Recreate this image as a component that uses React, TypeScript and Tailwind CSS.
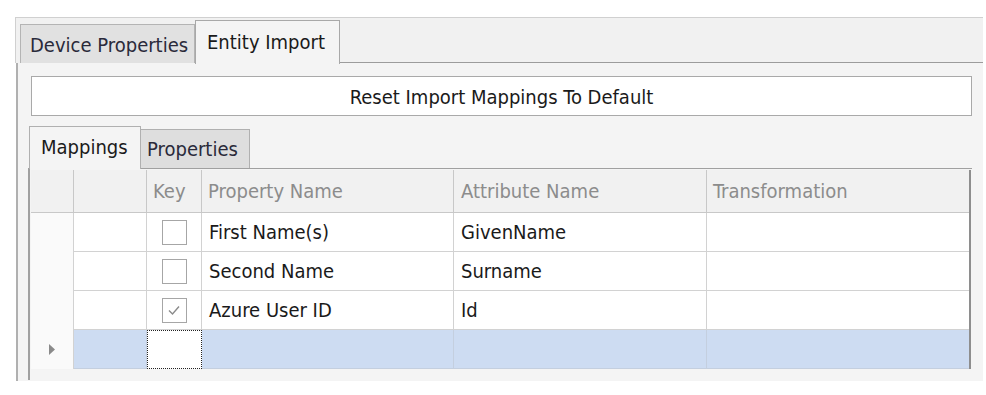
import React from "react";

const rows = [
  { key: false, prop: "First Name(s)", attr: "GivenName" },
  { key: false, prop: "Second Name", attr: "Surname" },
  { key: true, prop: "Azure User ID", attr: "Id" },
];

const cols = "grid-cols-[43px_73px_55px_252px_253px_262px]";

function Check({ on }: { on: boolean }) {
  return (
    <div className="w-[25px] h-[25px] border border-[#a6a6a6] bg-white flex items-center justify-center">
      {on && (
        <svg width="14" height="12" viewBox="0 0 14 12">
          <path d="M2 6.5 L5.5 10 L12 2.5" fill="none" stroke="#8a8a8a" strokeWidth="1.4" />
        </svg>
      )}
    </div>
  );
}

export default function App() {
  return (
    <div
      className="w-[986px] h-[395px] bg-white overflow-hidden pt-[17px] pl-[15px] pr-[3px] text-[20px] leading-none text-[#1a1a1a]"
      style={{ fontFamily: '"DejaVu Sans", Tahoma, sans-serif', fontStretch: "condensed" }}
    >
      {/* outer tab strip */}
      <div className="h-[46px] flex items-end bg-[#f1f1f1] border-t border-l border-[#d0d0d0] pl-[4px]">
        <div className="h-[39px] w-[175px] bg-[#e1e1e1] border border-b-0 border-[#b4b4b4] flex items-center pl-[9px] pt-[2px] text-[#2a2a3a]">
          Device Properties
        </div>
        <div className="h-[44px] w-[145px] -mb-px relative z-10 bg-[#f4f4f4] border border-b-0 border-[#a8a8a8] flex items-center pl-[11px] pb-[1px]">
          Entity Import
        </div>
        <div className="flex-1 h-full border-b border-[#9c9c9c]" />
      </div>

      {/* outer panel */}
      <div className="ml-px h-[318px] bg-[#f4f4f4] border-l-2 border-[#b0b0b0] pt-[13px] pl-[13px] pr-[11px]">
        <div className="h-[40px] bg-white border border-[#a9a9a9] flex items-center justify-center pt-[1px]">
          Reset Import Mappings To Default
        </div>

        {/* inner tabs */}
        <div className="mt-[9px] flex items-end h-[43px] -ml-[2px]">
          <div className="h-[43px] w-[112px] -mb-px relative z-10 bg-[#f4f4f4] border border-b-0 border-[#b0b0b0] flex items-center pl-[11px] pb-[2px]">
            Mappings
          </div>
          <div className="h-[39px] w-[109px] bg-[#dedede] border border-l-0 border-b-0 border-[#b0b0b0] flex items-center pl-[6px] text-[#2a2a3a]">
            Properties
          </div>
        </div>

        {/* tab page */}
        <div className="-ml-[3px] h-[212px] border-l-2 border-t border-[#a0a0a0] pt-[1px] pl-[1px]">
          <div className="w-[940px] border-r-2 border-[#8e8e8e]">
            <div className={`grid ${cols} h-[43px] bg-[#f1f1f1] border-b border-[#c8c8c8] text-[#8c8c8c]`}>
              <div className="border-r border-[#c8c8c8]" />
              <div className="border-r border-[#c8c8c8]" />
              <div className="border-r border-[#c8c8c8] flex items-center pl-[6px]">Key</div>
              <div className="border-r border-[#c8c8c8] flex items-center pl-[6px]">Property Name</div>
              <div className="border-r border-[#c8c8c8] flex items-center pl-[7px]">Attribute Name</div>
              <div className="flex items-center pl-[6px]">Transformation</div>
            </div>
            {rows.map((r) => (
              <div key={r.prop} className={`grid ${cols} h-[39px]`}>
                <div className="bg-[#fafafa] border-r border-[#d2d2d2]" />
                <div className="bg-white border-r border-b border-[#d2d2d2]" />
                <div className="bg-white border-r border-b border-[#d2d2d2] flex items-center justify-center">
                  <Check on={r.key} />
                </div>
                <div className="bg-white border-r border-b border-[#d2d2d2] flex items-center pl-[7px]">{r.prop}</div>
                <div className="bg-white border-r border-b border-[#d2d2d2] flex items-center pl-[7px]">{r.attr}</div>
                <div className="bg-white border-b border-[#d2d2d2]" />
              </div>
            ))}
            <div className={`grid ${cols} h-[39px]`}>
              <div className="bg-[#fafafa] border-r border-[#d2d2d2] flex items-center pl-[18px]">
                <svg width="7" height="11" viewBox="0 0 7 11">
                  <path d="M0 0 L6 5.5 L0 11 Z" fill="#8a8a8a" />
                </svg>
              </div>
              <div className="bg-[#cddcf2] border-r border-b border-[#c4cfdf]" />
              <div className="bg-white border border-dotted border-[#222]" />
              <div className="bg-[#cddcf2] border-r border-b border-[#c4cfdf]" />
              <div className="bg-[#cddcf2] border-r border-b border-[#c4cfdf]" />
              <div className="bg-[#cddcf2] border-b border-[#c4cfdf]" />
            </div>
          </div>
        </div>
      </div>
    </div>
  );
}
